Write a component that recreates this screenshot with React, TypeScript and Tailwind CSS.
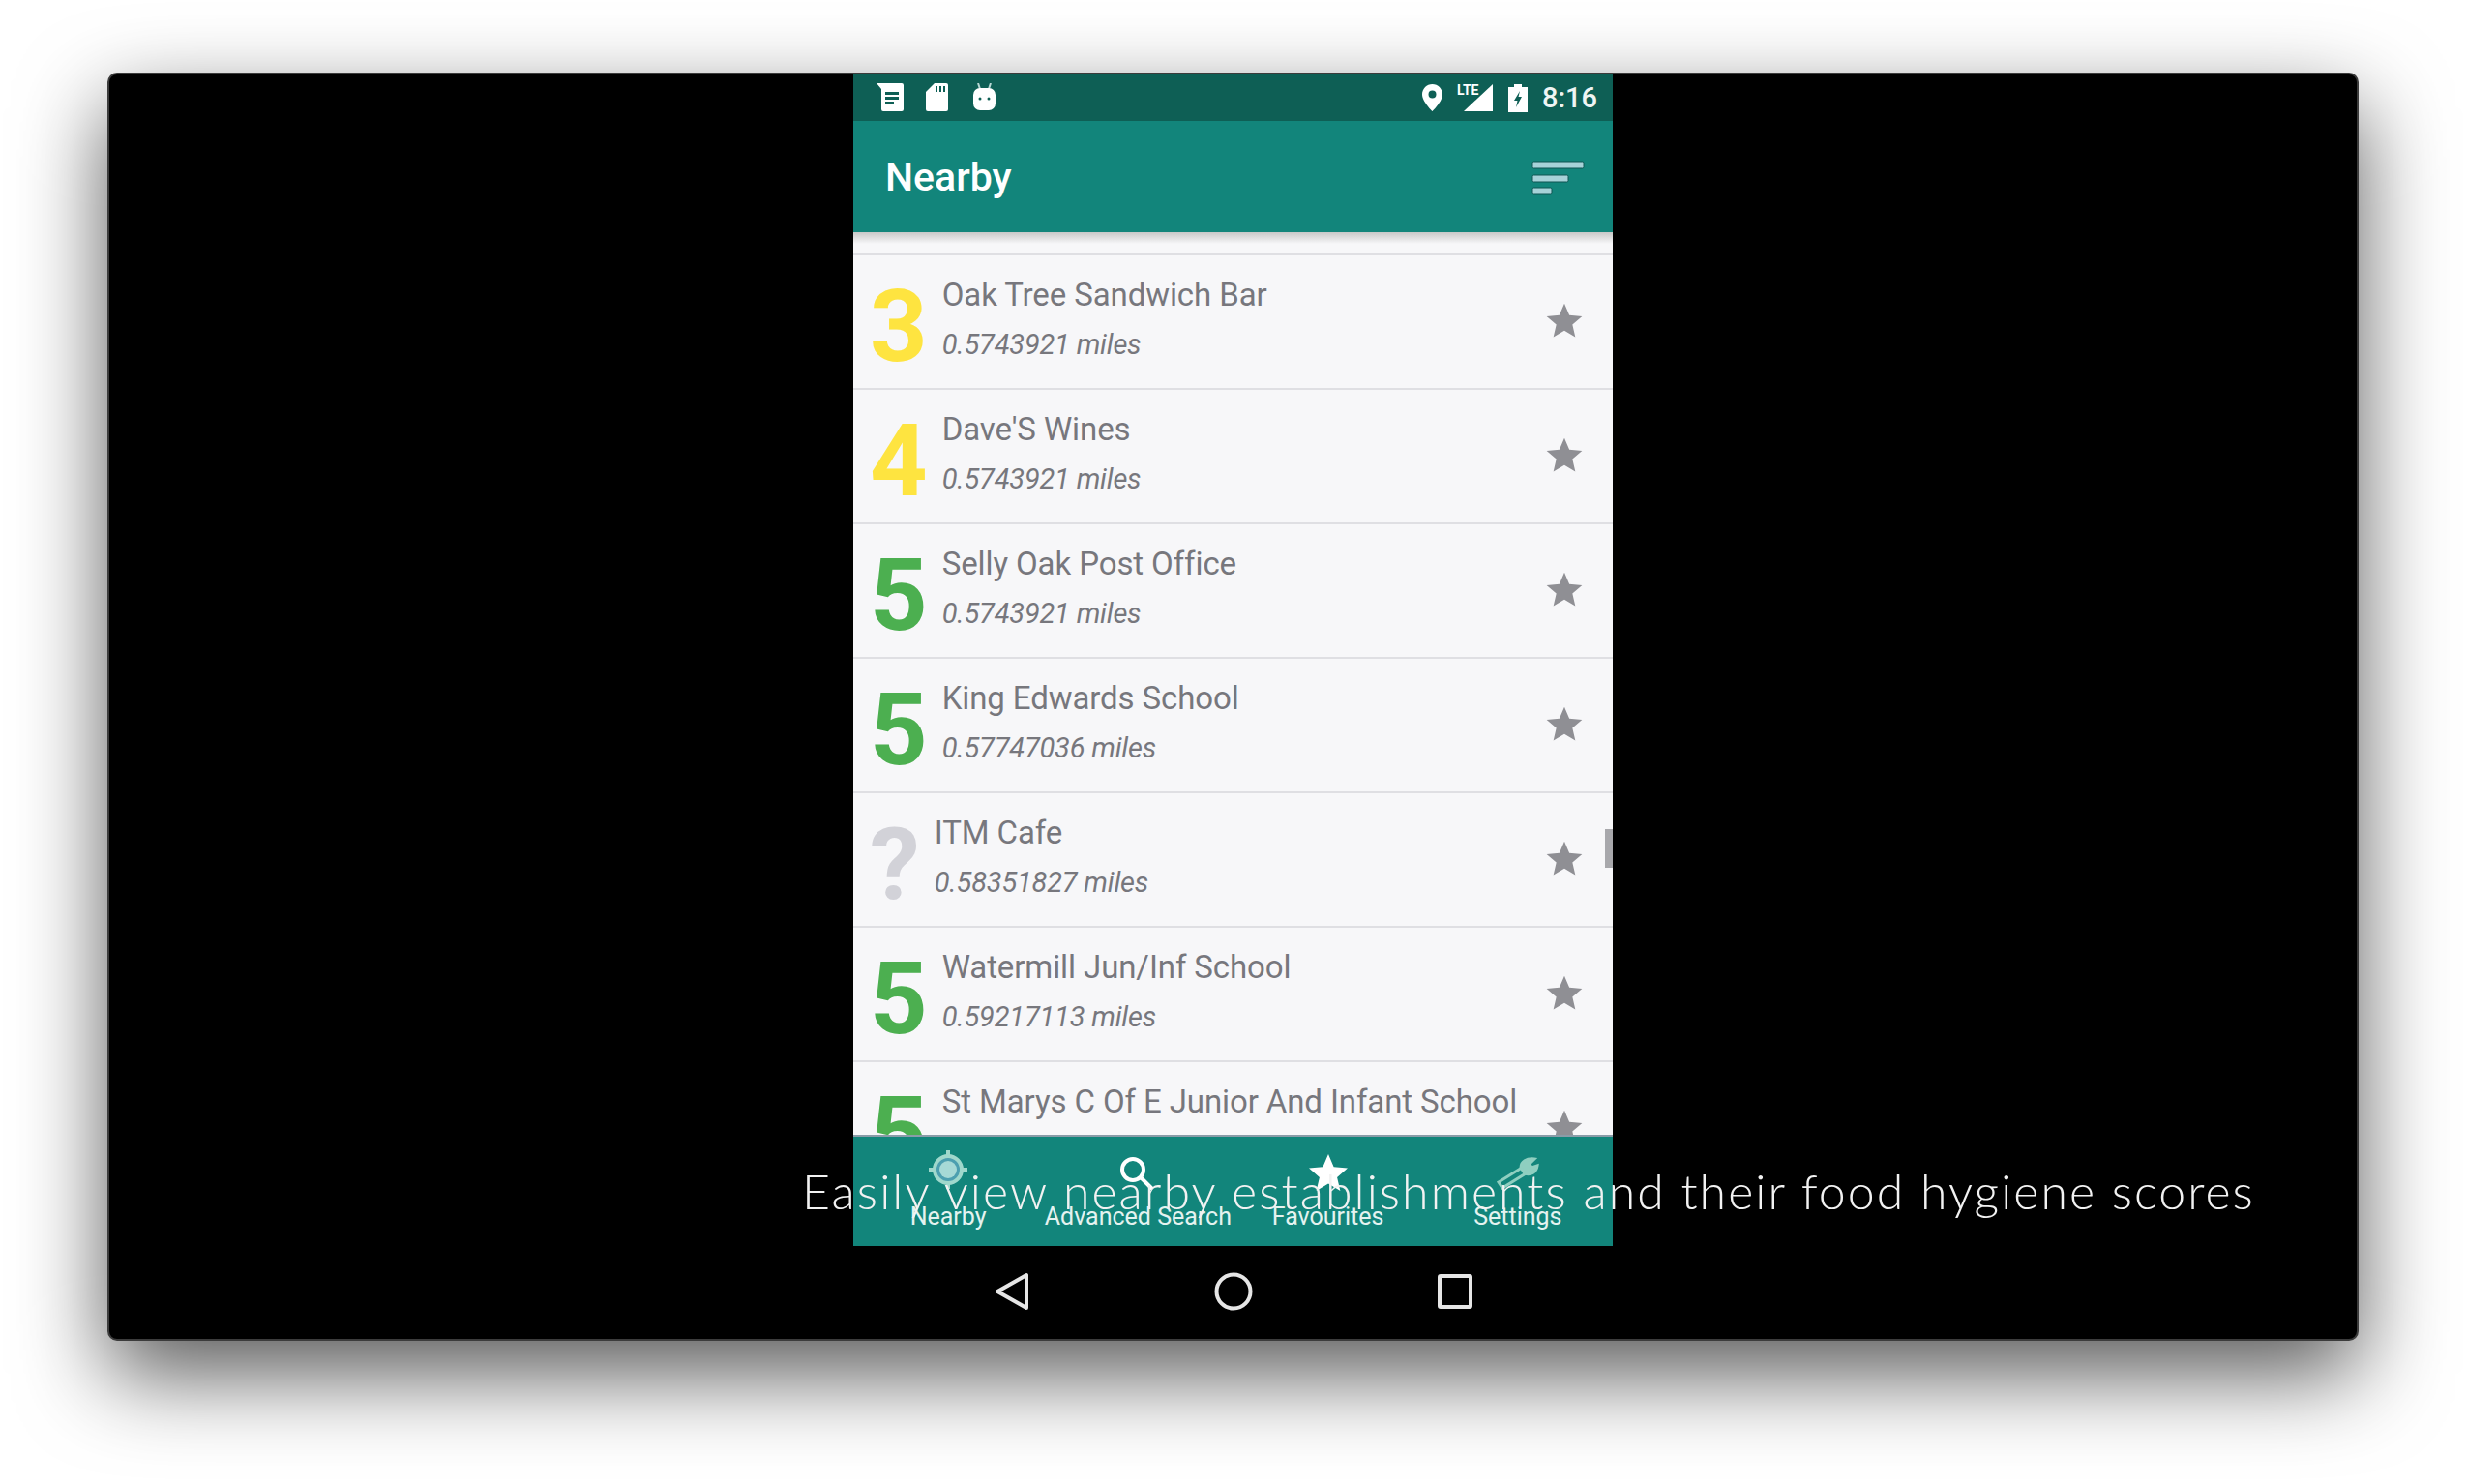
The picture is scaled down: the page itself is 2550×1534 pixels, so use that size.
const STAR = 'M12 17.27L18.18 21l-1.64-7.03L22 9.24l-7.19-.61L12 2 9.19 8.63 2 9.24l5.46 4.73L5.82 21z';

const rows = [
  { score: '3', color: 'text-[#fee440]', name: 'Oak Tree Sandwich Bar', miles: '0.5743921 miles' },
  { score: '4', color: 'text-[#fee440]', name: "Dave'S Wines", miles: '0.5743921 miles' },
  { score: '5', color: 'text-[#4caf50]', name: 'Selly Oak Post Office', miles: '0.5743921 miles' },
  { score: '5', color: 'text-[#4caf50]', name: 'King Edwards School', miles: '0.57747036 miles' },
  { score: '?', color: 'text-[#d2d2d8]', name: 'ITM Cafe', miles: '0.58351827 miles' },
  { score: '5', color: 'text-[#4caf50]', name: 'Watermill Jun/Inf School', miles: '0.59217113 miles' },
  { score: '5', color: 'text-[#4caf50]', name: 'St Marys C Of E Junior And Infant School', miles: '' },
];

function StatusIcons() {
  return (
    <div className="mt-[-2px] flex items-center">
      <svg width="28" height="29" viewBox="0 0 28 29" className="ml-[24px]">
        <path d="M0 0H26a2 2 0 0 1 2 2V27a2 2 0 0 1-2 2H7a2 2 0 0 1-2-2V6z" fill="#fff" />
        <path d="M9 9H23V12H9zM9 14H23V17H9zM9 19H18V22H9z" fill="#0e5f55" />
      </svg>
      <svg width="23" height="29" viewBox="0 0 23 29" className="ml-[23px]">
        <path d="M9 0H21a2 2 0 0 1 2 2V27a2 2 0 0 1-2 2H2a2 2 0 0 1-2-2V9z" fill="#fff" />
        <path d="M10 3H12V9H10zM14 3H16V9H14zM18 3H20V9H18z" fill="#0e5f55" />
      </svg>
      <svg width="23" height="29" viewBox="0 0 23 29" className="ml-[26px]">
        <path d="M5 0L7 6M18 0L16 6" stroke="#b8d8d4" strokeWidth="2" />
        <rect x="0" y="5" width="23" height="23" rx="7" fill="#fff" />
        <circle cx="7" cy="16" r="1.5" fill="#0e5f55" />
        <circle cx="16" cy="16" r="1.5" fill="#0e5f55" />
      </svg>
    </div>
  );
}

function StatusRight() {
  return (
    <div className="flex items-center">
      <svg width="21" height="28" viewBox="0 0 21 28">
        <path
          fillRule="evenodd"
          d="M10.5 0C4.7 0 0 4.7 0 10.5 0 18 10.5 28 10.5 28S21 18 21 10.5C21 4.7 16.3 0 10.5 0zM10.5 14.5a4 4 0 1 1 0-8 4 4 0 0 1 0 8z"
          fill="#fff"
        />
      </svg>
      <div className="relative ml-[15px] h-[28px] w-[37px]">
        <svg width="30" height="28" viewBox="0 0 30 28" className="absolute right-0 top-0">
          <path d="M30 0V28H0z" fill="#fff" />
        </svg>
        <span className="absolute left-0 top-[-3px] font-['Roboto',sans-serif] text-[14px] font-bold leading-[18px] text-white">
          LTE
        </span>
      </div>
      <svg width="20" height="29" viewBox="0 0 20 29" className="ml-[16px]">
        <path d="M6 0H14V3H20V29H0V3H6z" fill="#fff" />
        <path d="M12 7L6 17H9.5L8 24L14 13H10.5z" fill="#0e5f55" />
      </svg>
      <span className="ml-[15px] font-['Roboto',sans-serif] text-[29px] font-medium leading-none text-[#eef5f4]">
        8:16
      </span>
    </div>
  );
}

function Row({ score, color, name, miles }: (typeof rows)[number]) {
  return (
    <div className="flex h-[139px] shrink-0 items-center border-b-2 border-[#dfdfe3] pl-[17px] pr-[28px]">
      <span className={`mt-[11px] font-['Roboto',sans-serif] text-[104px] font-bold leading-none ${color}`}>{score}</span>
      <div className="mb-[4px] ml-[15px] min-w-0 flex-1">
        <p className="font-['Roboto',sans-serif] text-[33px] leading-[40px] tracking-[-0.1px] text-[#77777d]">{name}</p>
        <p className="mt-[11px] min-h-[40px] font-['Roboto',sans-serif] text-[29px] italic leading-[40px] tracking-[-0.2px] text-[#77777d]">
          {miles}
        </p>
      </div>
      <svg width="44" height="44" viewBox="0 0 24 24" fill="#8f8f94" className="mb-[2px]">
        <path d={STAR} />
      </svg>
    </div>
  );
}

function CrosshairIcon() {
  return (
    <svg width="44" height="44" viewBox="0 0 44 44">
      <circle cx="22" cy="23" r="14" fill="#4c9fb0" stroke="#9fd8cc" strokeWidth="4" />
      <circle cx="22" cy="23" r="9" fill="#a6d9d6" />
      <path d="M22 3V9M22 37V43M2 23H8M36 23H42" stroke="#9fd8cc" strokeWidth="4" />
    </svg>
  );
}

function SearchIcon() {
  return (
    <svg width="44" height="44" viewBox="0 0 44 44" fill="none" stroke="#fff" strokeWidth="4">
      <circle cx="17" cy="23" r="11" />
      <path d="M25 31L37 43" />
    </svg>
  );
}

function StarIcon() {
  return (
    <svg width="48" height="48" viewBox="0 0 24 24" fill="#fff" className="mt-[10px]">
      <path d={STAR} />
    </svg>
  );
}

function WrenchIcon() {
  return (
    <svg width="46" height="44" viewBox="0 0 46 44" fill="none" stroke="#8fcfc0" strokeWidth="3">
      <path d="M3 36L27 21l4 6L7 42z" />
      <path d="M26 21C26 15 32 11 40 12L35 17l2 4 6-2C42 26 36 29 30 27z" fill="#8fcfc0" />
    </svg>
  );
}

const tabs = [
  { label: 'Nearby', icon: <CrosshairIcon /> },
  { label: 'Advanced Search', icon: <SearchIcon /> },
  { label: 'Favourites', icon: <StarIcon /> },
  { label: 'Settings', icon: <WrenchIcon /> },
];

export default function App() {
  return (
    <div className="h-[1534px] w-[2550px] overflow-hidden bg-white pl-[111px] pt-[75px]">
      <div className="relative flex h-[1311px] w-[2327px] justify-center rounded-[10px] border-2 border-[#3c3c3c] bg-black shadow-[0_35px_90px_rgba(0,0,0,0.65)]">
        <div className="flex h-full w-[785px] flex-col">
          <div className="flex h-[48px] shrink-0 items-center justify-between bg-[#0e5f55] pr-[16px]">
            <StatusIcons />
            <StatusRight />
          </div>

          <div className="flex h-[115px] shrink-0 items-center justify-between bg-[#12857b] pl-[33px] pr-[29px]">
            <span className="mt-[3px] font-['Roboto',sans-serif] text-[41px] font-medium text-white">Nearby</span>
            <svg width="55" height="36" viewBox="0 0 55 36" className="mt-[2px]" fill="#a6d2d8" stroke="#0e5552" strokeWidth="1">
              <rect x="1" y="1" width="53" height="7" rx="1.5" />
              <rect x="1" y="15" width="37" height="7" rx="1.5" />
              <rect x="1" y="28" width="20" height="7" rx="1.5" />
            </svg>
          </div>

          <div className="relative flex min-h-0 flex-1 flex-col overflow-hidden bg-[#f7f7f9]">
            <div className="absolute inset-x-0 top-0 h-[12px] bg-gradient-to-b from-[#c8c8c8] to-transparent" />
            <div className="h-[24px] shrink-0 border-b-2 border-[#dfdfe3]" />
            {rows.map((row, i) => (
              <Row key={i} {...row} />
            ))}
            <div className="absolute right-0 top-[617px] h-[40px] w-[8px] bg-[#a8a8ac]" />
          </div>

          <div className="grid h-[115px] shrink-0 grid-cols-4 border-t-2 border-[#8a9ca8] bg-[#12857b]">
            {tabs.map((tab) => (
              <div key={tab.label} className="flex flex-col items-center pt-[11px]">
                <div className="flex h-[44px] items-center justify-center">{tab.icon}</div>
                <span className="mt-[13px] whitespace-nowrap font-['Roboto',sans-serif] text-[25px] leading-[30px] text-[#e4f3f0]">
                  {tab.label}
                </span>
              </div>
            ))}
          </div>

          <div className="flex h-[96px] shrink-0 items-center justify-center gap-[191px] pb-[2px]">
            <svg width="36" height="40" viewBox="0 0 36 40" fill="none" stroke="#e6e6e6" strokeWidth="4" strokeLinejoin="round">
              <path d="M33 3V37L3 20z" />
            </svg>
            <svg width="40" height="40" viewBox="0 0 40 40" fill="none" stroke="#e6e6e6" strokeWidth="4">
              <circle cx="20" cy="20" r="17.5" />
            </svg>
            <svg width="36" height="36" viewBox="0 0 36 36" fill="none" stroke="#e6e6e6" strokeWidth="4" strokeLinejoin="round">
              <rect x="2" y="2" width="32" height="32" rx="1" />
            </svg>
          </div>
        </div>

        <p className="absolute left-[716px] top-[1124px] whitespace-nowrap font-['Lato',sans-serif] text-[50px] font-light leading-[60px] tracking-[2.05px] text-[#f2f2f2]">
          Easily view nearby establishments and their food hygiene scores
        </p>
      </div>
    </div>
  );
}
